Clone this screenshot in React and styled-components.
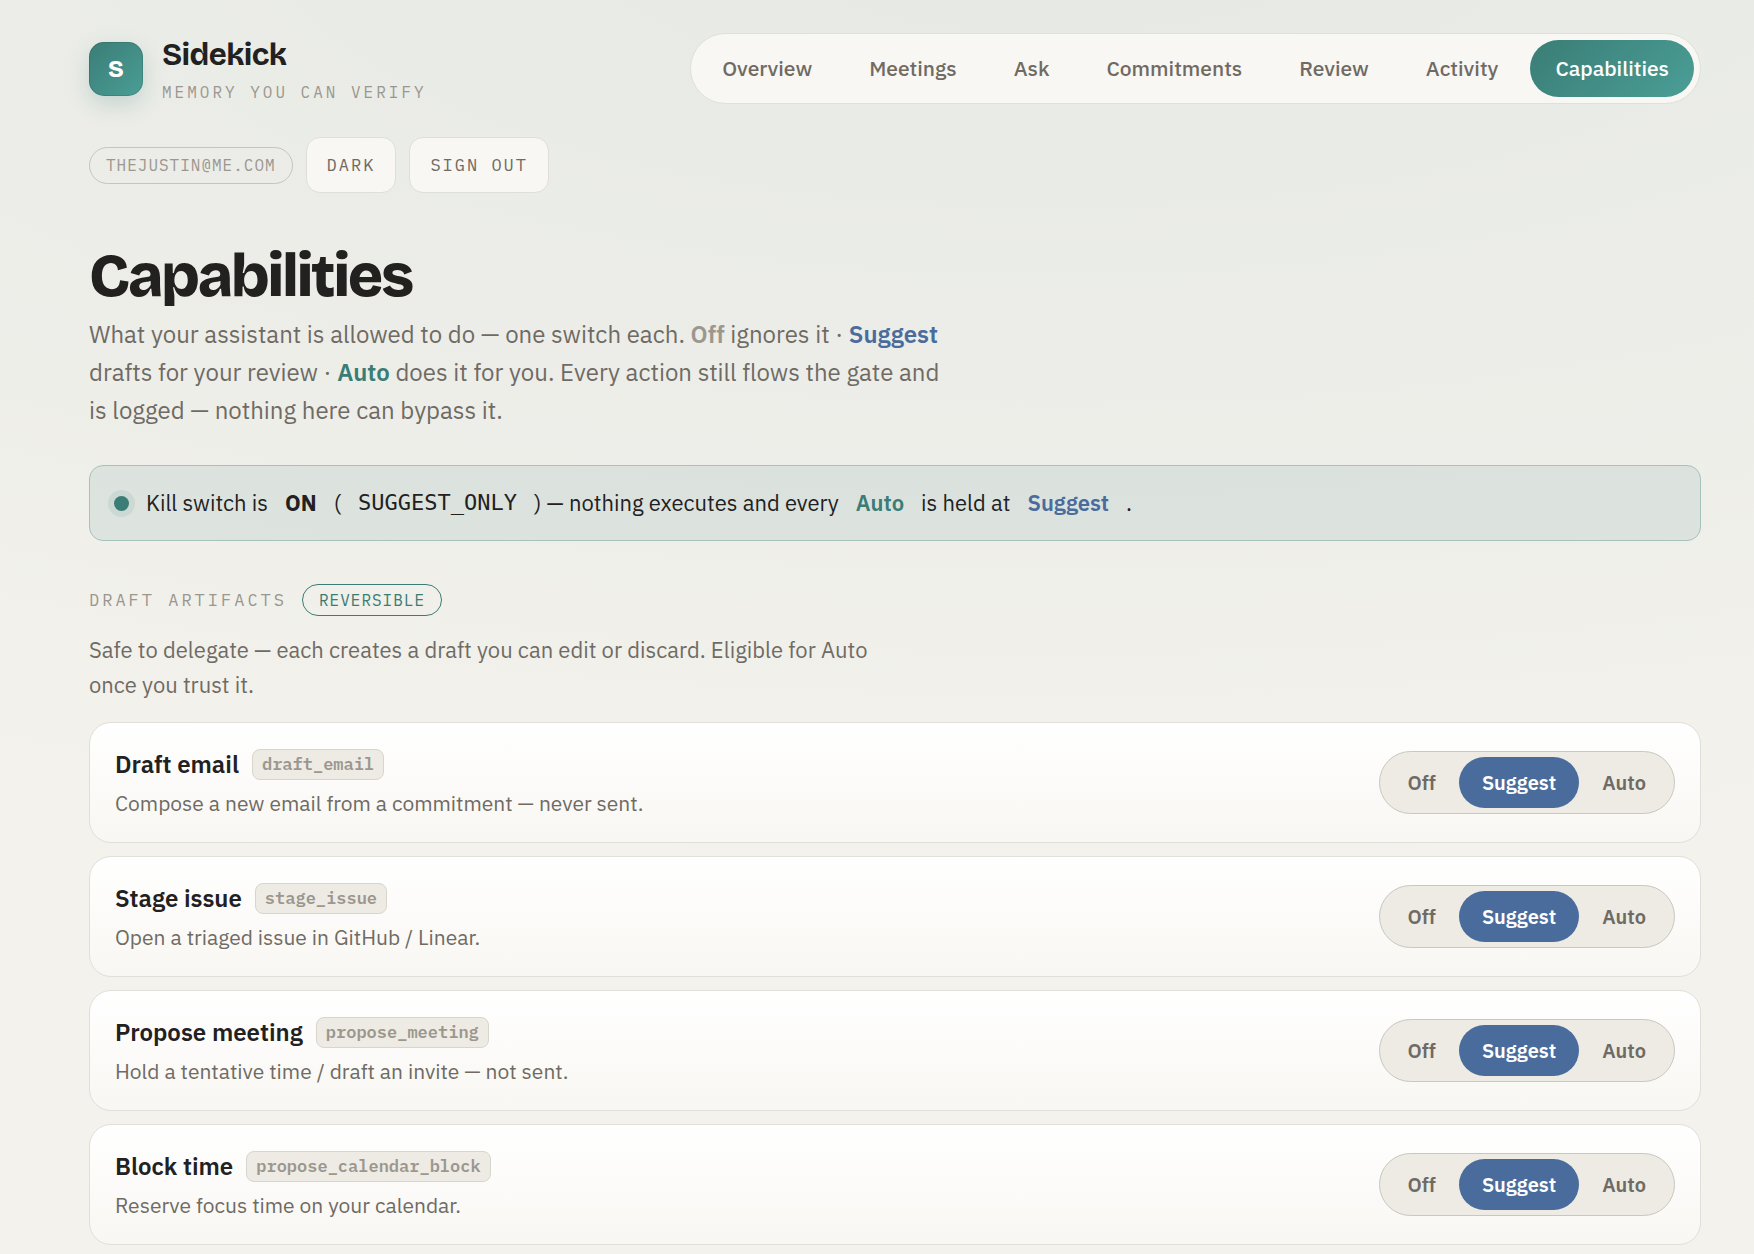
import React, { useState } from "react";
import styled, { createGlobalStyle, css } from "styled-components";

const sans = `"IBM Plex Sans", Roboto, sans-serif`;
const mono = `"IBM Plex Mono", "Liberation Mono", monospace`;
const display = `"Bricolage Grotesque", Inter, sans-serif`;

const navItems = [
  "Overview",
  "Meetings",
  "Ask",
  "Commitments",
  "Review",
  "Activity",
  "Capabilities",
];

const levels = ["Off", "Suggest", "Auto"];

const capabilities = [
  {
    id: "draft_email",
    title: "Draft email",
    text: "Compose a new email from a commitment — never sent.",
  },
  {
    id: "stage_issue",
    title: "Stage issue",
    text: "Open a triaged issue in GitHub / Linear.",
  },
  {
    id: "propose_meeting",
    title: "Propose meeting",
    text: "Hold a tentative time / draft an invite — not sent.",
  },
  {
    id: "propose_calendar_block",
    title: "Block time",
    text: "Reserve focus time on your calendar.",
  },
];

const CapabilityCard = ({ item }) => {
  const [level, setLevel] = useState("Suggest");

  return (
    <Card>
      <div>
        <CardTitle>
          {item.title} <Tag>{item.id}</Tag>
        </CardTitle>
        <CardText>{item.text}</CardText>
      </div>
      <Switch role="group" aria-label={item.title}>
        {levels.map((name) => (
          <SwitchButton
            key={name}
            type="button"
            aria-pressed={level === name}
            $active={level === name}
            onClick={() => setLevel(name)}
          >
            {name}
          </SwitchButton>
        ))}
      </Switch>
    </Card>
  );
};

const App = () => {
  return (
    <>
      <GlobalStyle />
      <Page>
        <Header>
          <Brand>
            <Logo>S</Logo>
            <div>
              <BrandName>Sidekick</BrandName>
              <BrandTagline>Memory you can verify</BrandTagline>
            </div>
          </Brand>
          <Nav>
            {navItems.map((name) => (
              <NavLink
                key={name}
                href={`#${name.toLowerCase()}`}
                $active={name === "Capabilities"}
              >
                {name}
              </NavLink>
            ))}
          </Nav>
        </Header>
        <Account>
          <Email>thejustin@me.com</Email>
          <AccountButton type="button">Dark</AccountButton>
          <AccountButton type="button">Sign out</AccountButton>
        </Account>

        <main>
          <Title>Capabilities</Title>
          <Intro>
            What your assistant is allowed to do — one switch each.{" "}
            <Level $name="Off">Off</Level> ignores it ·{" "}
            <Level $name="Suggest">Suggest</Level> drafts for your review ·{" "}
            <Level $name="Auto">Auto</Level> does it for you. Every action still
            flows the gate and is logged — nothing here can bypass it.
          </Intro>

          <Banner>
            <Dot />
            <span>Kill switch is</span>
            <Level>ON</Level>
            <span>(</span>
            <Code>SUGGEST_ONLY</Code>
            <span>) — nothing executes and every</span>
            <Level $name="Auto">Auto</Level>
            <span>is held at</span>
            <Level $name="Suggest">Suggest</Level>
            <span>.</span>
          </Banner>

          <SectionHead>
            <SectionLabel>Draft artifacts</SectionLabel>
            <Badge>Reversible</Badge>
          </SectionHead>
          <SectionText>
            Safe to delegate — each creates a draft you can edit or discard.
            Eligible for Auto once you trust it.
          </SectionText>

          <List>
            {capabilities.map((item) => (
              <CapabilityCard key={item.id} item={item} />
            ))}
          </List>
        </main>
      </Page>
    </>
  );
};
export default App;

const GlobalStyle = createGlobalStyle`
* {
  box-sizing: border-box;
}
body {
  margin: 0;
  min-height: 100vh;
  color: #22211f;
  font-family: ${sans};
  background: radial-gradient(ellipse 150% 960px at 60% -80px, rgba(58, 125, 117, 0.08), rgba(58, 125, 117, 0)) no-repeat #f4f2ed;
}
`;

const levelColors = {
  Off: "#9b978f",
  Suggest: "#4a6c9d",
  Auto: "#3a7d76",
};

const Page = styled.div`
  padding: 33px 53px 8px 89px;
`;

const Header = styled.header`
  display: flex;
  justify-content: space-between;
  align-items: center;
`;

const Brand = styled.div`
  display: flex;
  align-items: center;
  gap: 19px;
`;

const Logo = styled.div`
  width: 54px;
  height: 54px;
  display: flex;
  justify-content: center;
  align-items: center;
  border-radius: 15px;
  background: linear-gradient(135deg, #3a7d76, #4a9e96);
  box-shadow: 0 8px 22px rgba(58, 125, 118, 0.22),
    inset 0 0 0 1px rgba(34, 80, 75, 0.25);
  color: #fff;
  font-family: ${display};
  font-size: 24px;
  font-weight: 800;
`;

const BrandName = styled.div`
  font-family: ${display};
  font-size: 31px;
  font-weight: 700;
  line-height: 42px;
  letter-spacing: -0.02em;
`;

const BrandTagline = styled.div`
  margin-top: 4px;
  color: #9b978f;
  font-family: ${mono};
  font-size: 16px;
  line-height: 24px;
  letter-spacing: 3px;
  text-transform: uppercase;
`;

const Nav = styled.nav`
  display: flex;
  gap: 7px;
  padding: 6px;
  border: 1px solid #dfe0da;
  border-radius: 36px;
  background: #f9f7f3;
`;

const NavLink = styled.a`
  padding: 0 25px;
  border-radius: 29px;
  color: #6f6b64;
  font-size: 21px;
  font-weight: 500;
  line-height: 57px;
  text-decoration: none;
  ${(props) =>
    props.$active &&
    css`
      background: linear-gradient(135deg, #3a7d76, #4a9e96);
      color: #fff;
    `}
`;

const Account = styled.div`
  display: flex;
  align-items: center;
  gap: 13px;
  margin-top: 33px;
`;

const Email = styled.span`
  padding: 0 16px;
  border: 1px solid #c5c5bf;
  border-radius: 19px;
  color: #9b978f;
  font-family: ${mono};
  font-size: 16px;
  line-height: 35px;
  letter-spacing: 1px;
  text-transform: uppercase;
`;

const AccountButton = styled.button`
  height: 56px;
  padding: 0 20px;
  border: 1px solid #dfded9;
  border-radius: 14px;
  background: #f9f7f3;
  color: #6f6b64;
  font-family: ${mono};
  font-size: 17px;
  letter-spacing: 2px;
  text-transform: uppercase;
  cursor: pointer;
`;

const Title = styled.h1`
  margin: 47px 0 3px;
  font-family: ${display};
  font-size: 60px;
  font-weight: 800;
  line-height: 72px;
  letter-spacing: -0.04em;
`;

const Intro = styled.p`
  max-width: 864px;
  margin: 0;
  color: #6f6b64;
  font-size: 24px;
  line-height: 38px;
`;

const Level = styled.b`
  color: ${(props) => levelColors[props.$name] || "inherit"};
  font-weight: ${(props) => (props.$name ? 600 : 700)};
`;

const Banner = styled.div`
  display: flex;
  align-items: center;
  gap: 17px;
  margin-top: 36px;
  padding: 19px 24px;
  border: 1px solid #a6c2bc;
  border-radius: 14px;
  background: rgba(58, 125, 118, 0.1);
  font-size: 22px;
  line-height: 36px;
`;

const Dot = styled.span`
  width: 15px;
  height: 15px;
  border-radius: 50%;
  background: #3a7d76;
  box-shadow: 0 0 0 6px rgba(58, 125, 118, 0.1);
`;

const Code = styled.code`
  font-family: "DejaVu Sans Mono", monospace;
  font-size: 22px;
`;

const SectionHead = styled.div`
  display: flex;
  align-items: center;
  gap: 15px;
  margin-top: 43px;
`;

const SectionLabel = styled.h2`
  margin: 0;
  color: #9b978f;
  font-family: ${mono};
  font-size: 17px;
  font-weight: 400;
  line-height: 32px;
  letter-spacing: 3px;
  text-transform: uppercase;
`;

const Badge = styled.span`
  padding: 0 16px;
  border: 1px solid #3a7d76;
  border-radius: 16px;
  color: #3a7d76;
  font-family: ${mono};
  font-size: 16px;
  line-height: 30px;
  letter-spacing: 1px;
  text-transform: uppercase;
`;

const SectionText = styled.p`
  max-width: 800px;
  margin: 16px 0 20px;
  color: #6f6b64;
  font-size: 22px;
  line-height: 35px;
`;

const List = styled.div`
  display: grid;
  gap: 13px;
`;

const Card = styled.article`
  display: flex;
  justify-content: space-between;
  align-items: center;
  padding: 22px 25px;
  border: 1px solid #e0dfda;
  border-radius: 22px;
  background: linear-gradient(#fff, #f9f7f3);
`;

const CardTitle = styled.h3`
  display: flex;
  align-items: center;
  gap: 13px;
  margin: 0 0 3px;
  font-size: 24px;
  font-weight: 600;
  line-height: 38px;
`;

const Tag = styled.code`
  padding: 0 9px;
  border: 1px solid #d8d5cd;
  border-radius: 8px;
  background: #eeebe4;
  color: #9b978f;
  font-family: ${mono};
  font-size: 17px;
  line-height: 29px;
`;

const CardText = styled.p`
  margin: 0;
  color: #6f6b64;
  font-size: 21px;
  line-height: 34px;
`;

const Switch = styled.div`
  display: flex;
  padding: 5px;
  border: 1px solid #c9c7c0;
  border-radius: 32px;
  background: #eeebe4;
`;

const SwitchButton = styled.button`
  height: 51px;
  padding: 0 23px;
  border: 0;
  border-radius: 26px;
  background: ${(props) => (props.$active ? "#4a6c9d" : "transparent")};
  color: ${(props) => (props.$active ? "#fff" : "#6f6b64")};
  font-family: ${sans};
  font-size: 20px;
  font-weight: 600;
  cursor: pointer;
`;
